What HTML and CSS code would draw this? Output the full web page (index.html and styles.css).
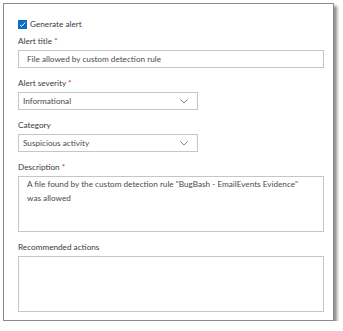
FILE: index.html
```html
<!DOCTYPE html>
<html lang="en">

<head>
  <meta charset="UTF-8">
  <meta name="viewport" content="width=device-width, initial-scale=1.0">
  <title>Alert details</title>
  <link rel="stylesheet" href="styles.css">
</head>

<body>
  <div class="panel">
    <label class="check">
      <svg class="check__box" width="9" height="9" viewBox="0 0 9 9">
        <rect x="0" y="0" width="9" height="9" fill="#0a6fc2" />
        <path d="M2 4.8 L3.7 6.4 L7.2 2.6" fill="none" stroke="#fff" stroke-width="1" />
      </svg>
      Generate alert
    </label>

    <div class="field">
      <div class="field__label">Alert title <span class="req">*</span></div>
      <div class="control control--text">File allowed by custom detection rule</div>
    </div>

    <div class="field">
      <div class="field__label">Alert severity <span class="req">*</span></div>
      <div class="control control--select">
        <span>Informational</span>
        <svg width="8" height="5" viewBox="0 0 8 5">
          <path d="M0.5 0.5 L4 4 L7.5 0.5" fill="none" stroke="#777" stroke-width="0.9" />
        </svg>
      </div>
    </div>

    <div class="field">
      <div class="field__label">Category</div>
      <div class="control control--select">
        <span>Suspicious activity</span>
        <svg width="8" height="5" viewBox="0 0 8 5">
          <path d="M0.5 0.5 L4 4 L7.5 0.5" fill="none" stroke="#777" stroke-width="0.9" />
        </svg>
      </div>
    </div>

    <div class="field">
      <div class="field__label">Description <span class="req">*</span></div>
      <div class="control control--area">A file found by the custom detection rule "BugBash - EmailEvents Evidence" was allowed</div>
    </div>

    <div class="field">
      <div class="field__label">Recommended actions</div>
      <div class="control control--area"></div>
    </div>
  </div>
</body>

</html>
```

FILE: styles.css
```css
html {
  box-sizing: border-box;
}

*,
*::before,
*::after {
  box-sizing: inherit;
}

body {
  margin: 0;
  background-color: #fff;
  font-family: Lato, "Noto Sans", sans-serif;
  font-size: 8.2px;
  color: #3a3a3a;
}

.panel {
  margin: 3px 0 0 3px;
  width: 331px;
  height: 318px;
  border: 1px solid #8a8a8a;
  box-shadow: 3px 3px 3px rgba(0, 0, 0, 0.45);
  padding: 14px 9px 0 14px;
  display: flex;
  flex-direction: column;
}

.check {
  display: flex;
  align-items: center;
  gap: 3px;
  height: 12px;
  line-height: 12px;
  margin-bottom: 5px;
}

.field {
  display: flex;
  flex-direction: column;
  margin-bottom: 9px;
}

.field__label {
  line-height: 12px;
  margin-bottom: 3px;
}

.req {
  color: #d13438;
}

.control {
  border: 1px solid #c6c6c6;
  background-color: #fff;
  color: #4a4a4a;
}

.control--text {
  height: 18px;
  line-height: 16px;
  padding: 0 8px;
}

.control--select {
  width: 180px;
  height: 18px;
  line-height: 16px;
  padding: 0 9px 0 4px;
  display: flex;
  align-items: center;
  justify-content: space-between;
}

.control--area {
  height: 56px;
  line-height: 14px;
  padding: 0 20px 0 8px;
}
```
